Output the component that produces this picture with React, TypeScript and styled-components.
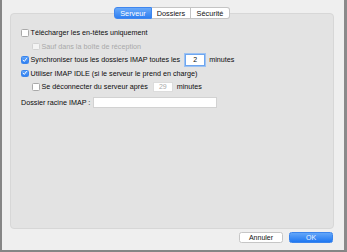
import * as React from 'react'
import styled, { createGlobalStyle } from 'styled-components'

const GlobalStyle = createGlobalStyle`
    html, body {
        margin: 0;
        padding: 0;
        background: #efefef;
    }
    body {
        font-family: "Liberation Sans", Arial, sans-serif;
        -webkit-font-smoothing: antialiased;
    }
`

const Window = styled.div`
    box-sizing: border-box;
    width: 347px;
    height: 252px;
    display: flex;
    flex-direction: column;
    padding: 7px 0 0 8px;
    background: #efefef;
    border-left: 2px solid #858585;
    border-right: 3px solid #8a8a8a;
    border-bottom: 2px solid #858585;
`

const TabBar = styled.div`
    position: relative;
    z-index: 1;
    display: flex;
    justify-content: center;
    width: 324px;
    height: 12px;
`

const Tab = styled.div<{ $active?: boolean }>`
    box-sizing: border-box;
    display: flex;
    align-items: center;
    justify-content: center;
    height: 12px;
    width: ${(p) => p.$active ? '38px' : '39px'};
    font-size: 7.3px;
    color: ${(p) => p.$active ? '#ffffff' : '#111111'};
    background: ${(p) => p.$active ? 'linear-gradient(#6aaaf9, #2f7ff1)' : '#ffffff'};
    border: 1px solid ${(p) => p.$active ? '#3f86ee' : '#c4c4c4'};
    border-left-width: 0;
    &:first-child {
        border-left-width: 1px;
        border-radius: 3px 0 0 3px;
    }
    &:last-child {
        border-radius: 0 3px 3px 0;
    }
`

const Panel = styled.div`
    box-sizing: border-box;
    width: 324px;
    height: 216px;
    margin-top: -6px;
    padding: 12px 10px 0 10px;
    background: #e3e3e3;
    border: 1px solid #d7d7d7;
    border-radius: 4px;
`

const Row = styled.div<{ $indent?: boolean; $tall?: boolean }>`
    display: flex;
    align-items: center;
    height: ${(p) => p.$tall ? '15px' : '13.5px'};
    margin-top: ${(p) => p.$tall ? '1px' : '0'};
    padding-left: ${(p) => p.$indent ? '11px' : '0'};
`

const Box = styled.span<{ $checked?: boolean; $disabled?: boolean }>`
    box-sizing: border-box;
    display: inline-flex;
    align-items: center;
    justify-content: center;
    width: 7.5px;
    height: 7.5px;
    margin-right: 2px;
    border-radius: 1.5px;
    border: 1px solid ${(p) => p.$checked ? '#3a85ee' : p.$disabled ? '#d2d2d2' : '#a9a9a9'};
    background: ${(p) => p.$checked ? 'linear-gradient(#62a5f8, #2f7ff1)' : p.$disabled ? '#f4f4f4' : '#ffffff'};
`

const Label = styled.span<{ $disabled?: boolean }>`
    font-size: 7.2px;
    white-space: nowrap;
    color: ${(p) => p.$disabled ? '#a9a9a9' : '#0c0c0c'};
`

const NumberField = styled.span<{ $focused?: boolean; $disabled?: boolean }>`
    box-sizing: border-box;
    display: inline-flex;
    align-items: center;
    justify-content: center;
    width: 20px;
    height: ${(p) => p.$focused ? '12px' : '9.5px'};
    margin: 0 4px 0 5px;
    font-size: 7px;
    color: ${(p) => p.$disabled ? '#a8a8a8' : '#0c0c0c'};
    background: #ffffff;
    border: 1px solid ${(p) => p.$focused ? '#6ea6ef' : '#dcdcdc'};
    box-shadow: ${(p) => p.$focused ? '0 0 0 1px #9cc2f3' : 'none'};
`

const TextField = styled.span`
    box-sizing: border-box;
    display: inline-block;
    width: 124px;
    height: 11px;
    margin-left: 3px;
    background: #ffffff;
    border: 1px solid #d2d2d2;
`

const Footer = styled.div`
    display: flex;
    justify-content: flex-end;
    gap: 6px;
    margin-top: 3px;
    padding-right: 11px;
`

const Button = styled.div<{ $primary?: boolean }>`
    box-sizing: border-box;
    display: flex;
    align-items: center;
    justify-content: center;
    width: 44px;
    height: 11px;
    font-size: 7px;
    border-radius: 2.5px;
    color: ${(p) => p.$primary ? '#eaf3ff' : '#111111'};
    background: ${(p) => p.$primary ? 'linear-gradient(#63a6f9, #1f77f1)' : '#ffffff'};
    border: 1px solid ${(p) => p.$primary ? '#3a84ec' : '#c6c6c6'};
`

const Check = () => (
    <svg width="6" height="6" viewBox="0 0 10 10">
        <path d="M2 5.3 L4.2 7.6 L8.2 2.2" fill="none" stroke="#ffffff" strokeWidth="1.8" strokeLinecap="round" strokeLinejoin="round" />
    </svg>
)

const Checkbox = ({ checked, disabled }: { checked?: boolean; disabled?: boolean }) => (
    <Box $checked={checked} $disabled={disabled}>{checked && <Check />}</Box>
)

const App = () => (
    <Window>
        <GlobalStyle />
        <TabBar>
            <Tab $active>Serveur</Tab>
            <Tab>Dossiers</Tab>
            <Tab>Sécurité</Tab>
        </TabBar>
        <Panel>
            <Row>
                <Checkbox />
                <Label>Télécharger les en-têtes uniquement</Label>
            </Row>
            <Row $indent>
                <Checkbox disabled />
                <Label $disabled>Sauf dans la boîte de réception</Label>
            </Row>
            <Row>
                <Checkbox checked />
                <Label>Synchroniser tous les dossiers IMAP toutes les</Label>
                <NumberField $focused>2</NumberField>
                <Label>minutes</Label>
            </Row>
            <Row>
                <Checkbox checked />
                <Label>Utiliser IMAP IDLE (si le serveur le prend en charge)</Label>
            </Row>
            <Row $indent>
                <Checkbox />
                <Label>Se déconnecter du serveur après</Label>
                <NumberField $disabled>29</NumberField>
                <Label>minutes</Label>
            </Row>
            <Row $tall>
                <Label>Dossier racine IMAP :</Label>
                <TextField />
            </Row>
        </Panel>
        <Footer>
            <Button>Annuler</Button>
            <Button $primary>OK</Button>
        </Footer>
    </Window>
)

export default App
